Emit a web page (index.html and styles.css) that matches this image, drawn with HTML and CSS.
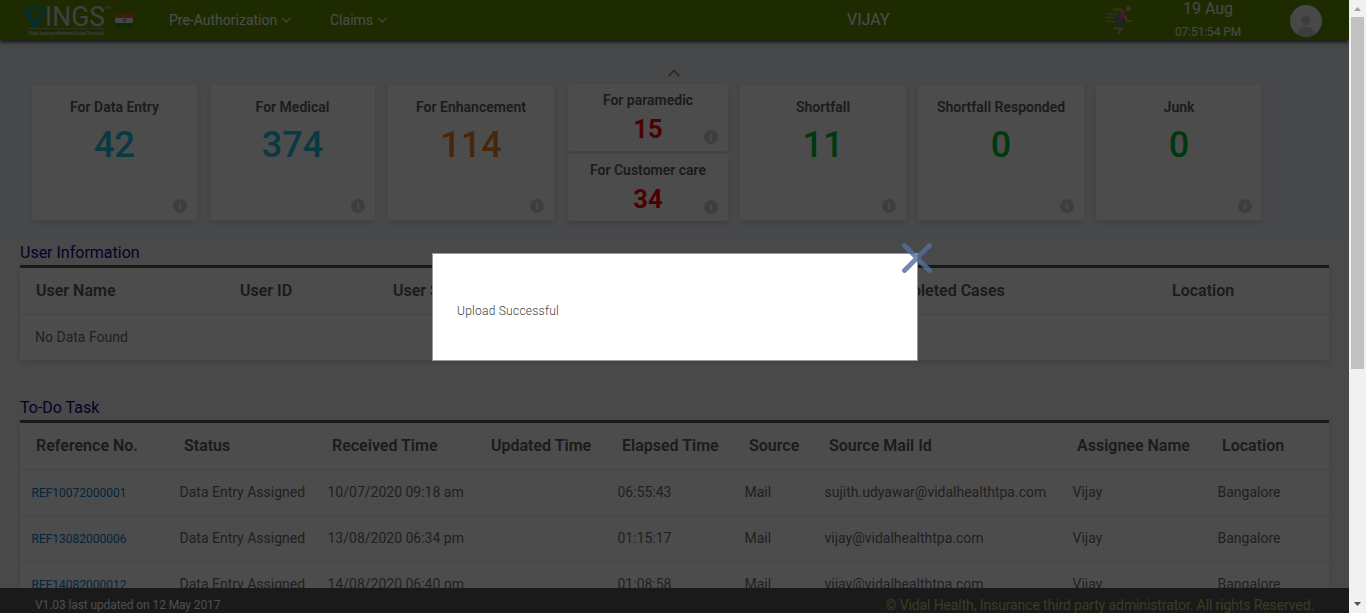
FILE: index.html
```html
<!DOCTYPE html>
<html lang="en">
<head>
<meta charset="utf-8">
<title>VINGS</title>
<link rel="stylesheet" href="styles.css">
</head>
<body>
<div class="window">
  <div class="page">
    <header class="nav">
      <div class="brand">
        <svg class="logo" width="86" height="34" viewBox="0 0 86 34">
          <path d="M1 3 Q9 -2 21 2 L20.500 7 L11 20 Q5 12 1 3Z" fill="none" stroke="#009cb8" stroke-width="1.3"/>
          <path d="M1.500 3.500L11 19.500L20 6" stroke="#009cb8" stroke-width="3.600" fill="none"/>
          <path d="M1 3L10 6L21 2" stroke="#009cb8" stroke-width="1" fill="none"/>
          <text class="logo-name" x="21" y="20" textLength="60" lengthAdjust="spacingAndGlyphs">INGS</text>
          <path d="M4 22.500H80" stroke="#a6a6a6" stroke-width=".8"/>
          <text class="logo-sub" x="4" y="28.500" textLength="76" lengthAdjust="spacingAndGlyphs">(Vidal Insurance Network Global Services)</text>
          <text class="logo-tm" x="81" y="3">TM</text>
        </svg>
        <svg class="flag" width="18" height="13" viewBox="0 0 18 13"><path fill="#d8622e" d="M0 0h18v4H0z"/><path fill="#e8e8e8" d="M0 4h18v5H0z"/><path fill="#3e8a04" d="M0 9h18v4H0z"/><circle cx="9.500" cy="6.500" r="1.200" fill="none" stroke="#446" stroke-width=".8"/></svg>
      </div>
      <nav class="menu">
        <span class="menu-item">Pre-Authorization<svg width="9" height="6" viewBox="0 0 9 6"><path d="M.5 1l4 4 4-4"/></svg></span>
        <span class="menu-item claims">Claims<svg width="9" height="6" viewBox="0 0 9 6"><path d="M.5 1l4 4 4-4"/></svg></span>
      </nav>
      <div class="user">VIJAY</div>
      <svg class="runner" width="28" height="32" viewBox="0 0 28 32" fill="none" stroke-width="2.2">
        <circle cx="23.500" cy="5.500" r="2.600" fill="#c8a07c"/>
        <path d="M8 6.500h8l3 3M20 13l2 5h5M9 25.500h7l-3 6M9 25.500h9" stroke="#c8a07c"/>
        <path d="M18.500 10l-3.500 6" stroke="#c858a0" stroke-width="5"/>
        <path d="M12 15l5 7" stroke="#6476b8" stroke-width="4"/>
        <path d="M1 11h11M0 14.500h10M1 18.500h10" stroke="#90a0a6" stroke-width="1.500"/>
      </svg>
      <div class="clock"><div class="date">19 Aug</div><div class="time">07:51:54 PM</div></div>
      <svg class="avatar" width="32" height="32" viewBox="0 0 32 32"><defs><clipPath id="disc"><circle cx="16" cy="16" r="16"/></clipPath></defs><circle cx="16" cy="16" r="16" fill="#f0f1f4"/><g clip-path="url(#disc)" fill="#c9ced3"><circle cx="16" cy="15.500" r="4.700"/><ellipse cx="16" cy="30" rx="9" ry="8"/></g></svg>
    </header>

    <section class="dashboard">
      <svg class="collapse" width="12" height="8" viewBox="0 0 12 8"><path d="M.5 7.200L6 1.500l5.500 5.700"/></svg>
      <div class="cards">
        <article class="card"><h3>For Data Entry</h3><b class="blue">42</b><i class="info"></i></article>
        <article class="card"><h3>For Medical</h3><b class="blue">374</b><i class="info"></i></article>
        <article class="card"><h3>For Enhancement</h3><b class="orange">114</b><i class="info"></i></article>
        <div class="stack">
          <article class="card small"><h3>For paramedic</h3><b class="red">15</b><i class="info"></i></article>
          <article class="card small"><h3>For Customer care</h3><b class="red">34</b><i class="info"></i></article>
        </div>
        <article class="card"><h3>Shortfall</h3><b class="green">11</b><i class="info"></i></article>
        <article class="card"><h3>Shortfall Responded</h3><b class="green">0</b><i class="info"></i></article>
        <article class="card"><h3>Junk</h3><b class="green">0</b><i class="info"></i></article>
      </div>
    </section>

    <section class="block">
      <h2>User Information</h2>
      <div class="table users">
        <div class="row head"><span>User Name</span><span>User ID</span><span>User Status</span><span>Completed Cases</span><span>Location</span></div>
        <div class="row empty"><span>No Data Found</span></div>
      </div>
    </section>

    <section class="block">
      <h2>To-Do Task</h2>
      <div class="table tasks">
        <div class="row head"><span>Reference No.</span><span>Status</span><span>Received Time</span><span>Updated Time</span><span>Elapsed Time</span><span>Source</span><span>Source Mail Id</span><span>Assignee Name</span><span>Location</span></div>
        <div class="row"><a>REF10072000001</a><span>Data Entry Assigned</span><span>10/07/2020 09:18 am</span><span></span><span>06:55:43</span><span>Mail</span><span>sujith.udyawar@vidalhealthtpa.com</span><span>Vijay</span><span>Bangalore</span></div>
        <div class="row"><a>REF13082000006</a><span>Data Entry Assigned</span><span>13/08/2020 06:34 pm</span><span></span><span>01:15:17</span><span>Mail</span><span>vijay@vidalhealthtpa.com</span><span>Vijay</span><span>Bangalore</span></div>
        <div class="row"><a>REF14082000012</a><span>Data Entry Assigned</span><span>14/08/2020 06:40 pm</span><span></span><span>01:08:58</span><span>Mail</span><span>vijay@vidalhealthtpa.com</span><span>Vijay</span><span>Bangalore</span></div>
      </div>
    </section>

    <footer class="footer"><span class="version">V1.03 last updated on 12 May 2017</span><span class="copy">© Vidal Health, Insurance third party administrator. All rights Reserved.</span></footer>

    <div class="overlay">
      <div class="dialog">
        <p>Upload Successful</p>
        <svg class="close" width="30" height="30" viewBox="0 0 30 30"><path d="M2.500 2.500l25 25M27.500 2.500l-25 25"/></svg>
      </div>
    </div>
  </div>
  <div class="scrollbar">
    <svg width="17" height="17" viewBox="0 0 17 17"><path d="M5 11h7L8.500 7z" fill="#a3a3a3"/></svg>
    <div class="thumb"></div>
    <svg class="down" width="17" height="17" viewBox="0 0 17 17"><path d="M5 6h7L8.500 10z" fill="#505050"/></svg>
  </div>
</div>
</body>
</html>
```
FILE: styles.css
```css
* { box-sizing: border-box; }
body { margin: 0; font-family: Roboto, "Liberation Sans", sans-serif; overflow: hidden; }
h2, h3, p { margin: 0; }
.window { display: flex; width: 1366px; height: 613px; }
.page { position: relative; width: 1349px; height: 613px; overflow: hidden; background: #f3f3f3; }

.nav { position: relative; z-index: 1; display: flex; height: 40px; background: #648f03; color: #fff; box-shadow: 0 2px 4px rgba(0,0,0,.75); }
.brand { display: flex; width: 169px; padding: 6px 0 0 24px; }
.logo { overflow: visible; }
.logo-name { font: 400 27px Roboto, sans-serif; fill: #d8d8d8; }
.logo-sub { font: 500 4.5px Roboto, sans-serif; fill: #d8d8d8; }
.logo-tm { font: 4px Roboto, sans-serif; fill: #d8d8d8; }
.flag { margin: 8px 0 0 5px; }
.menu { display: flex; width: 678px; font-size: 14px; line-height: 40px; color: #fff; }
.menu-item { width: 161px; white-space: nowrap; }
.menu-item svg { margin: 0 0 2px 5px; fill: none; stroke: #f0f0f0; stroke-width: 1.1; }
.user { width: 258px; font-size: 16px; line-height: 39px; color: #fff; }
.runner { margin-top: 3px; }
.clock { width: 150px; text-align: center; color: #f0f0f0; }
.date { font-size: 16px; line-height: 18px; }
.time { font-size: 12px; line-height: 28px; letter-spacing: -.1px; }
.avatar { margin: 5px 0 0 7px; }

.dashboard { height: 200px; padding-top: 29px; background: #edf0f5; }
.collapse { display: block; margin: 0 0 7px 668px; fill: none; stroke: #777; stroke-width: 1.3; }
.cards { display: grid; grid-template-columns: 178px 178px 178px 174px 178px 178px 178px; padding-left: 26px; }
.card { display: flex; flex-direction: column; align-items: center; position: relative; height: 135px; margin: 1px 6px 0; padding-top: 14px; border-radius: 3px; background: #fff; box-shadow: 0 3px 5px rgba(90,100,115,.16); }
.card:nth-child(-n+2) { margin-right: 7px; }
.card h3 { font-size: 14px; font-weight: 600; line-height: 16px; color: #5c5c5c; }
.card b { margin-top: 9px; font-size: 36px; font-weight: 500; line-height: 42px; }
.stack { display: grid; gap: 3px; margin: 0 6px 0 8px; height: 137px; grid-template-rows: 67px 67px; }
.stack .card.small { height: 67px; margin: 0; padding-top: 8px; }
.card.small b { margin-top: 6px; font-size: 25.5px; line-height: 30px; font-weight: 700; }
.card .blue { color: #20bee2; }
.card .orange { color: #ef8228; }
.card .green { color: #00bd38; }
.card .red { color: #f00; }
.info { position: absolute; right: 10px; bottom: 7px; width: 14px; height: 14px; border-radius: 50%; background: linear-gradient(#f4f4f4, #f4f4f4) 6px 4px / 2px 7px no-repeat #d0d0d0; }

.block { padding: 0 20px; height: 155px; }
.block h2 { height: 25px; padding-top: 3px; font-size: 16px; font-weight: 400; line-height: 19px; color: #15008a; }
.table { border-top: 3px solid #555; background: #fff; box-shadow: 0 3px 5px rgba(80,95,110,.16); font-size: 14px; color: #6c6c6c; }
.row { display: grid; height: 46px; line-height: 44px; border-bottom: 1px solid #e6e6e6; white-space: nowrap; }
.row.head { height: 47px; line-height: 45px; font-size: 16px; font-weight: 600; color: #5c5c5c; }
.row.head span { padding-left: 4px; }
.users .head { grid-template-columns: 204px 153px 485.5px 293.5px 1fr; padding-left: 12px; }
.users .empty { height: 45px; padding-left: 15px; border-bottom: 0; }
.tasks .row { grid-template-columns: 148px 148px 159px 131px 127px 80px 248px 145px 1fr; padding-left: 12px; }
.tasks .row:not(.head) { padding-left: 11.5px; }
.tasks a { font-size: 12px; line-height: 46px; color: #0a78cc; }

.footer { position: absolute; left: 0; right: 0; bottom: 0; display: flex; justify-content: space-between; height: 25px; padding: 0 35px; background: #575757; line-height: 34px; }
.version { font-size: 12px; letter-spacing: -.1px; color: #fff; }
.copy { font-size: 14px; letter-spacing: -.115px; color: #b4d268; }

.overlay { position: absolute; inset: 0; z-index: 2; padding: 253px 0 0 432px; background: rgba(0,0,0,.7); }
.dialog { position: relative; width: 486px; height: 108px; padding: 49px 24px; border: 1px solid #999; background: #fff; }
.dialog p { font-size: 12px; line-height: 17px; letter-spacing: .25px; color: #3c3c3c; font-weight: 300; }
.close { position: absolute; top: -11px; right: -15px; fill: none; stroke: rgba(84,110,155,.82); stroke-width: 4.8; stroke-linecap: round; }

.scrollbar { display: flex; flex-direction: column; width: 17px; height: 613px; background: #f1f1f1; }
.thumb { width: 13px; height: 352px; margin-left: 2px; background: #c1c1c1; }
.down { margin-top: auto; }
```
